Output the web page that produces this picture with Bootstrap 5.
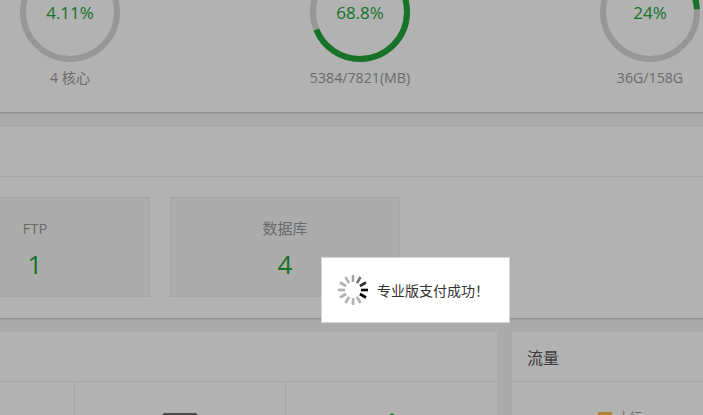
<!DOCTYPE html>
<html lang="zh">
<head>
<meta charset="utf-8">
<title>面板</title>
<link href="https://cdn.jsdelivr.net/npm/bootstrap@5.3.0/dist/css/bootstrap.min.css" rel="stylesheet">
<style>
html,body{height:415px;overflow:hidden;background:#f4f4f4;font-family:"Open Sans","Noto Sans CJK SC",sans-serif;color:#666}
.page-shell{width:1000px;margin-left:-100px}
.panel-box{background:#fff;border-radius:0;border:0;box-shadow:0 1px 2px rgba(0,0,0,.22)}
.gauge-panel{margin-top:-38px;height:150px;padding-left:25px}
.gauge-cell{width:290px}
.gauge-ring{width:100px;height:100px;position:relative}
.gauge-ring svg{display:block}
.gauge-value{position:absolute;inset:0;display:flex;align-items:center;justify-content:center;color:#20a53a;font-size:17px;line-height:1;padding-top:1px}
.gauge-label{margin-top:6px;font-size:14.2px;line-height:20px;color:#999}
.site-panel{margin-top:15px;height:191px}
.panel-head{height:50px;border-bottom:1px solid #eee}
.tile-row{padding:20px 0 0 20px;gap:20px}
.tile-item{width:230px;height:100px;background:#f6f6f6;border:1px solid #eee;text-align:center;padding-top:20px}
.tile-name{font-size:15px;line-height:20px;color:#999}
.tile-num{font-size:26px;line-height:36px;color:#20a53a;margin-top:8px}
.lower-row{margin-top:14px;gap:15px;align-items:stretch}
.soft-panel{width:597px;height:120px;flex:none;box-shadow:none}
.traffic-panel{flex:1;height:120px;box-shadow:none}
.traffic-title{height:50px;border-bottom:1px solid #eee;padding:0 15px;line-height:53px;font-size:16px;color:#555}
.soft-cells{height:70px}
.soft-cell{width:211px;border-right:1px solid #eee;padding-top:31px}
.soft-cell:first-child{width:175px}
.soft-cell:last-child{border-right:0;width:211px}
.legend-swatch{width:14px;height:10px;background:#fcbc50;margin-top:1px}
.legend-text{font-size:12px;line-height:14px;color:#999}
.legend-row{padding:29px 0 0 86px;gap:6px}
.veil-layer{position:fixed;inset:0;background:rgba(0,0,0,.3)}
.toast-box{position:fixed;left:321px;top:257px;width:189px;height:66px;background:#fff;border:1px solid #d4d4d4;color:#333;font-size:14px;padding-left:15px;gap:8px}
</style>
</head>
<body>
<div class="page-shell">
  <div class="card panel-box gauge-panel flex-row">
    <div class="gauge-cell d-flex flex-column align-items-center">
      <div class="gauge-ring">
        <svg width="100" height="100" viewBox="0 0 100 100"><circle cx="50" cy="50" r="47" fill="none" stroke="#d8d8d8" stroke-width="6"/><circle cx="50" cy="50" r="47" fill="none" stroke="#20a53a" stroke-width="6" stroke-dasharray="12.1 283.2" transform="rotate(-90 50 50)"/></svg>
        <div class="gauge-value">4.11%</div>
      </div>
      <div class="gauge-label">4 核心</div>
    </div>
    <div class="gauge-cell d-flex flex-column align-items-center">
      <div class="gauge-ring">
        <svg width="100" height="100" viewBox="0 0 100 100"><circle cx="50" cy="50" r="47" fill="none" stroke="#d8d8d8" stroke-width="6"/><circle cx="50" cy="50" r="47" fill="none" stroke="#20a53a" stroke-width="6" stroke-dasharray="203.2 295.3" transform="rotate(-90 50 50)"/></svg>
        <div class="gauge-value">68.8%</div>
      </div>
      <div class="gauge-label">5384/7821(MB)</div>
    </div>
    <div class="gauge-cell d-flex flex-column align-items-center">
      <div class="gauge-ring">
        <svg width="100" height="100" viewBox="0 0 100 100"><circle cx="50" cy="50" r="47" fill="none" stroke="#d8d8d8" stroke-width="6"/><circle cx="50" cy="50" r="47" fill="none" stroke="#20a53a" stroke-width="6" stroke-dasharray="70.9 295.3" transform="rotate(-90 50 50)"/></svg>
        <div class="gauge-value">24%</div>
      </div>
      <div class="gauge-label">36G/158G</div>
    </div>
  </div>

  <div class="card panel-box site-panel">
    <div class="panel-head"></div>
    <div class="d-flex tile-row">
      <div class="tile-item"><div class="tile-name">FTP</div><div class="tile-num">1</div></div>
      <div class="tile-item"><div class="tile-name">数据库</div><div class="tile-num">4</div></div>
    </div>
  </div>

  <div class="d-flex lower-row">
    <div class="card panel-box soft-panel">
      <div class="panel-head"></div>
      <div class="d-flex soft-cells">
        <div class="soft-cell"></div>
        <div class="soft-cell d-flex justify-content-center">
          <svg width="36" height="20" viewBox="0 0 36 20"><path d="M0 20V3a3 3 0 0 1 3-3h30a3 3 0 0 1 3 3v17z" fill="#6a6a6a"/></svg>
        </div>
        <div class="soft-cell d-flex justify-content-center">
          <svg width="14" height="20" viewBox="0 0 14 20"><path d="M1 5.5L7 1l6 4.5" fill="none" stroke="#20a53a" stroke-width="1.6"/><path d="M1 5v15M13 5v15" fill="none" stroke="#20a53a" stroke-width="1.6"/></svg>
        </div>
      </div>
    </div>
    <div class="card panel-box traffic-panel">
      <div class="traffic-title">流量</div>
      <div class="d-flex legend-row">
        <span class="legend-swatch"></span><span class="legend-text">上行</span>
      </div>
    </div>
  </div>
</div>

<div class="veil-layer"></div>
<div class="toast-box d-flex align-items-center">
  <svg width="32" height="32" viewBox="-16 -16 32 32" stroke-width="2.6" stroke-linecap="butt">
    <g stroke="#000">
      <line x1="8" y1="0" x2="15" y2="0" transform="rotate(0)"/>
      <line x1="8" y1="0" x2="15" y2="0" transform="rotate(30)"/>
      <line x1="8" y1="0" x2="15" y2="0" transform="rotate(60)" opacity=".3"/>
      <line x1="8" y1="0" x2="15" y2="0" transform="rotate(90)" opacity=".3"/>
      <line x1="8" y1="0" x2="15" y2="0" transform="rotate(120)" opacity=".3"/>
      <line x1="8" y1="0" x2="15" y2="0" transform="rotate(150)" opacity=".3"/>
      <line x1="8" y1="0" x2="15" y2="0" transform="rotate(180)" opacity=".3"/>
      <line x1="8" y1="0" x2="15" y2="0" transform="rotate(210)" opacity=".3"/>
      <line x1="8" y1="0" x2="15" y2="0" transform="rotate(240)" opacity=".3"/>
      <line x1="8" y1="0" x2="15" y2="0" transform="rotate(270)" opacity=".35"/>
      <line x1="8" y1="0" x2="15" y2="0" transform="rotate(300)" opacity=".55"/>
      <line x1="8" y1="0" x2="15" y2="0" transform="rotate(330)" opacity=".8"/>
    </g>
  </svg>
  <span>专业版支付成功！</span>
</div>
<script src="https://cdn.jsdelivr.net/npm/bootstrap@5.3.0/dist/js/bootstrap.bundle.min.js"></script>
</body>
</html>
